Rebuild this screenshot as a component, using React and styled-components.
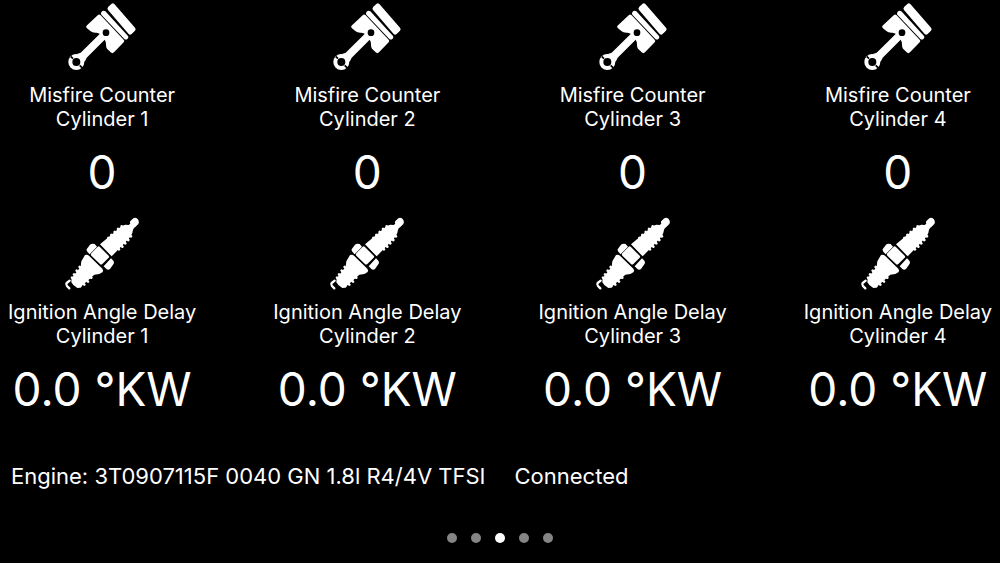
import React from "react";
import styled, { createGlobalStyle } from "styled-components";

const GlobalStyle = createGlobalStyle`
  * { box-sizing: border-box; }
  body {
    margin: 0;
    background: #000;
    color: #fff;
    font-family: Inter, "Liberation Sans", sans-serif;
  }
`;

const Page = styled.main`
  display: flex;
  flex-direction: column;
  min-height: 100vh;
`;

const GaugeGrid = styled.section`
  display: grid;
  grid-template-columns: repeat(4, max-content);
  justify-content: space-between;
  row-gap: 15px;
  padding: 0 8px;
`;

const Gauge = styled.article`
  display: flex;
  flex-direction: column;
  align-items: center;
  text-align: center;
`;

const Icon = styled.svg`
  display: block;
  width: 84px;
  height: 80px;
  fill: #fff;
`;

const Label = styled.h2`
  margin: 3px 0 0;
  font-size: 20px;
  font-weight: 400;
  line-height: 24px;
`;

const Value = styled.p`
  margin: 11px 0 0;
  font-size: 46px;
  font-weight: 400;
  line-height: 60px;
`;

const StatusBar = styled.footer`
  display: flex;
  gap: 29px;
  margin-top: 43px;
  padding: 0 11px;
  font-size: 22px;
  line-height: 28px;
`;

const Status = styled.span`
  white-space: pre;
`;

const Pager = styled.nav`
  display: flex;
  justify-content: center;
  gap: 14px;
  margin-top: 43px;
`;

const Dot = styled.button`
  width: 10px;
  height: 10px;
  padding: 0;
  border: 0;
  border-radius: 50%;
  background: ${({ $active }) => ($active ? "#fff" : "#858585")};
`;

function PistonIcon() {
  return (
    <Icon viewBox="0 0 252 240" aria-hidden="true">
      <path d="M145 20 155 11Q159 8 163 12L225 83Q229 88 225 92L214 103Q210 106 206 102L144 30Q140 25 145 20Z" />
      <path d="M125 35Q130 30 136 34L204 108Q207 112 203 116 198 121 193 117L124 44Q121 39 125 35Z" />
      <path d="M114 45Q118 42 122 46L191 119Q195 123 191 127L162 157Q157 162 152 157L141 146Q138 143 138 134 138 124 134 119L80 173 74 185 51 162 62 158 119 102Q120 100 110 98 97 99 92 94L80 84Q76 80 81 76Z" />
      <circle cx="49" cy="186" r="24" />
      <circle cx="49" cy="186" r="12" fill="#000" />
      <path d="M32 169 39 176M59 196 68 205" stroke="#000" strokeWidth="5" />
      <circle cx="138" cy="98" r="10" fill="#000" />
    </Icon>
  );
}

function SparkPlugIcon() {
  return (
    <Icon viewBox="0 9 252 240" aria-hidden="true">
      <path d="M212 20 220 13Q226 9 233 15 239 22 235 30L229 36Q225 40 222 42L219 47 217 57 211 68 191 90 155 127 120 91 158 59 185 36 196 32 206 33 211 29Q208 24 212 20Z" />
      <g fill="none" stroke="#fff" strokeWidth="8" strokeLinecap="round">
        <path d="M185 37 213 67M174 45 205 78M164 54 196 88M154 63 187 98M145 72 177 106" />
        <path d="M59 159 94 191M50 170 84 203M42 181 73 212M36 191 61 217" />
      </g>
      <path d="M119 98 146 125Q149 128 146 131L127 150Q123 153 120 150L94 125Q91 121 94 118L113 98Q116 95 119 98Z" />
      <path d="M90 92Q93 89 98 89L104 90 111 98 89 121 82 113Q78 108 81 104ZM153 133 160 140Q163 144 161 149L150 165Q145 169 140 166L131 157Z" />
      <path d="M75 123Q81 120 87 125L127 164Q132 170 127 175L118 180 103 182 59 221 52 222 40 213 34 205 35 193 62 158 64 142Z" />
      <path d="M29 200 20 207Q17 211 21 216L28 223" fill="none" stroke="#fff" strokeWidth="7" strokeLinecap="round" strokeLinejoin="round" />
    </Icon>
  );
}

const cylinders = [1, 2, 3, 4];
const rows = [
  { name: "Misfire Counter", value: "0", Picture: PistonIcon },
  { name: "Ignition Angle Delay", value: "0.0 °KW", Picture: SparkPlugIcon },
];
const pages = [1, 2, 3, 4, 5];
const currentPage = 3;

export default function App() {
  return (
    <>
      <GlobalStyle />
      <Page>
        <GaugeGrid>
          {rows.map(({ name, value, Picture }) =>
            cylinders.map((cylinder) => (
              <Gauge key={name + cylinder}>
                <Picture />
                <Label>
                  {name}
                  <br />
                  Cylinder {cylinder}
                </Label>
                <Value>{value}</Value>
              </Gauge>
            ))
          )}
        </GaugeGrid>
        <StatusBar>
          <Status>Engine: 3T0907115F 0040 GN 1.8l R4/4V TFSI</Status>
          <Status>Connected</Status>
        </StatusBar>
        <Pager aria-label="Pages">
          {pages.map((page) => (
            <Dot
              key={page}
              type="button"
              $active={page === currentPage}
              aria-label={`Page ${page}`}
              aria-current={page === currentPage ? "page" : undefined}
            />
          ))}
        </Pager>
      </Page>
    </>
  );
}
